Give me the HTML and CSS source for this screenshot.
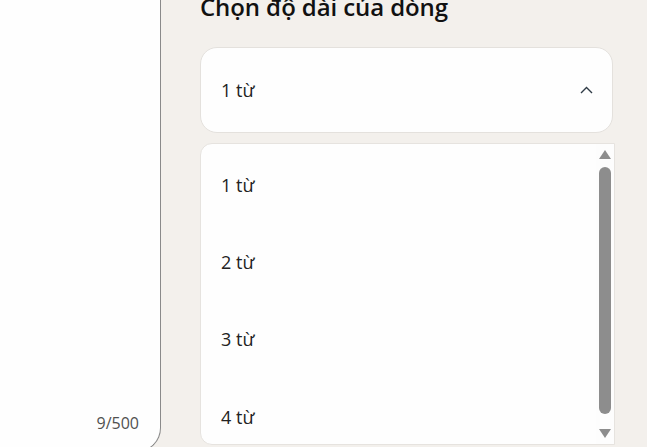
FILE: index.html
```html
<!DOCTYPE html>
<html lang="vi">
<head>
<meta charset="utf-8">
<link rel="stylesheet" href="styles.css">
</head>
<body>
<div class="page">
  <aside class="editor">
    <span class="counter">9/500</span>
  </aside>
  <main class="settings">
    <h2 class="title">Chọn độ dài của dòng</h2>
    <div class="select">
      <span class="select-value">1 từ</span>
      <svg class="chevron" width="13" height="8" viewBox="0 0 13 8"><polyline points="1,7 6.5,1.5 12,7" fill="none" stroke="#2f3b46" stroke-width="1.4"/></svg>
    </div>
    <div class="list">
      <div class="option">1 từ</div>
      <div class="option">2 từ</div>
      <div class="option">3 từ</div>
      <div class="option">4 từ</div>
      <div class="scrollbar">
        <span class="arrow up"></span>
        <span class="thumb"></span>
        <span class="arrow down"></span>
      </div>
    </div>
  </main>
</div>
</body>
</html>
```

FILE: styles.css
```css
html, body {
  margin: 0;
  padding: 0;
  height: 100%;
  overflow: hidden;
}
body {
  background: #f3f0ec;
  font-family: "Open Sans", "Noto Sans", sans-serif;
  color: #1f1f1f;
}
.page {
  display: flex;
  align-items: flex-start;
  height: 447px;
}
.editor {
  box-sizing: border-box;
  width: 161px;
  height: 452px;
  flex: none;
  background: #fefefe;
  border-right: 1px solid #8a8a8a;
  border-bottom: 1px solid #8a8a8a;
  border-bottom-right-radius: 24px;
  display: flex;
  align-items: flex-end;
  justify-content: flex-end;
  padding: 0 21px 17px 0;
}
.counter {
  font-size: 16px;
  line-height: 22px;
  color: #505050;
}
.settings {
  flex: 1;
  padding: 0 32px 0 39px;
  display: flex;
  flex-direction: column;
}
.title {
  margin: -9px 0 0;
  font-size: 24px;
  line-height: 32px;
  font-weight: 600;
  color: #111;
  letter-spacing: -0.1px;
}
.select {
  box-sizing: border-box;
  margin-top: 24px;
  width: 413px;
  height: 86px;
  background: #fefefe;
  border: 1px solid #e4e1dd;
  border-radius: 17px;
  display: flex;
  align-items: center;
  justify-content: space-between;
  padding: 0 19px 0 20px;
}
.select-value, .option {
  font-size: 18px;
  color: #222;
}
.chevron {
  display: block;
}
.list {
  box-sizing: border-box;
  position: relative;
  margin-top: 10px;
  width: 415px;
  height: 302px;
  background: #fefefe;
  border: 1px solid #e6e3df;
  border-radius: 12px 0 0 12px;
  overflow: hidden;
  padding-top: 2px;
}
.option {
  height: 77.3px;
  display: flex;
  align-items: center;
  padding-left: 20px;
}
.scrollbar {
  position: absolute;
  top: 0;
  right: 0;
  bottom: 0;
  width: 18px;
  background: #fdfdfd;
}
.thumb {
  position: absolute;
  top: 23px;
  bottom: 30px;
  right: 3px;
  width: 12px;
  border-radius: 6px;
  background: #8d8d8d;
}
.arrow {
  position: absolute;
  right: 3px;
  width: 0;
  height: 0;
  border-left: 6.5px solid transparent;
  border-right: 6.5px solid transparent;
}
.arrow.up {
  top: 6px;
  border-bottom: 9px solid #8d8d8d;
}
.arrow.down {
  bottom: 6px;
  border-top: 9px solid #8d8d8d;
}
```
